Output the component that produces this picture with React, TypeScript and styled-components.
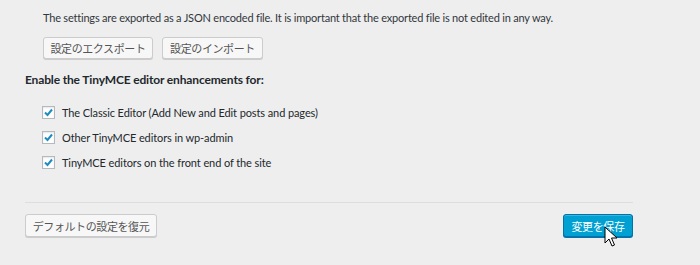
import React from "react";
import styled, { createGlobalStyle } from "styled-components";

const Global = createGlobalStyle`
  html, body { margin: 0; padding: 0; background: #eeeeee; }
  body { font-family: Lato, "Noto Sans", sans-serif; color: #444; }
`;

const Page = styled.div`
  width: 608px;
  margin-left: 25px;
  padding-top: 9px;
  position: relative;
  height: 256px;
`;

const Intro = styled.div`
  padding-left: 18px;
`;

const Note = styled.p`
  margin: 0;
  font-size: 11px;
  letter-spacing: -0.2px;
  line-height: 18px;
  white-space: nowrap;
  color: #32373c;
`;

const ButtonRow = styled.div`
  display: flex;
  gap: 9px;
  margin-top: 10px;
`;

const Button = styled.button<{ $primary?: boolean; $w: number; $h: number }>`
  box-sizing: border-box;
  width: ${(p) => p.$w}px;
  height: ${(p) => p.$h}px;
  padding: 0;
  border-radius: 3px;
  font-family: "Noto Sans CJK JP", sans-serif;
  font-size: 11px;
  letter-spacing: -0.4px;
  display: flex;
  align-items: center;
  justify-content: center;
  cursor: pointer;
  border: 1px solid ${(p) => (p.$primary ? "#0073aa" : "#cccccc")};
  background: ${(p) => (p.$primary ? "#00a0d2" : "#f7f7f7")};
  color: ${(p) => (p.$primary ? "#ffffff" : "#555555")};
  box-shadow: ${(p) =>
    p.$primary ? "inset 0 1px 0 rgba(120,200,230,.5), 0 1px 0 #0073aa" : "0 1px 0 #cccccc"};
`;

const Heading = styled.h3`
  margin: 12px 0 0;
  font-size: 12px;
  letter-spacing: -0.15px;
  font-weight: 700;
  line-height: 18px;
  color: #23282d;
`;

const List = styled.ul`
  list-style: none;
  margin: 14px 0 0;
  padding: 0 0 0 17px;
  display: flex;
  flex-direction: column;
  gap: 7px;
`;

const Item = styled.li`
  display: flex;
  align-items: center;
  gap: 7px;
  height: 18px;
  font-size: 11px;
  letter-spacing: -0.1px;
  color: #23282d;
`;

const Box = styled.span`
  box-sizing: border-box;
  width: 13px;
  height: 13px;
  background: #fff;
  border: 1px solid #b4b9be;
  box-shadow: inset 0 1px 2px rgba(0, 0, 0, 0.1);
  display: flex;
  align-items: center;
  justify-content: center;
`;

const Divider = styled.hr`
  border: 0;
  border-top: 1px solid #dddddd;
  margin: 31px 0 0;
`;

const Footer = styled.div`
  display: flex;
  justify-content: space-between;
  margin-top: 11px;
`;

const SaveWrap = styled.div`
  position: relative;
`;

const Cursor = styled.svg`
  position: absolute;
  left: 41px;
  top: 12px;
  pointer-events: none;
`;

const Check = () => (
  <svg width="11" height="11" viewBox="0 0 11 11">
    <path d="M2 5.5 L4.5 8 L9 2.5" fill="none" stroke="#1e8cbe" strokeWidth="2" />
  </svg>
);

const items = [
  "The Classic Editor (Add New and Edit posts and pages)",
  "Other TinyMCE editors in wp-admin",
  "TinyMCE editors on the front end of the site",
];

export default function App() {
  return (
    <>
      <Global />
      <Page>
        <Intro>
          <Note>
            The settings are exported as a JSON encoded file. It is important that the exported
            file is not edited in any way.
          </Note>
          <ButtonRow>
            <Button $w={110} $h={22}>設定のエクスポート</Button>
            <Button $w={101} $h={22}>設定のインポート</Button>
          </ButtonRow>
        </Intro>
        <Heading>Enable the TinyMCE editor enhancements for:</Heading>
        <List>
          {items.map((t) => (
            <Item key={t}>
              <Box>
                <Check />
              </Box>
              {t}
            </Item>
          ))}
        </List>
        <Divider />
        <Footer>
          <Button $w={132} $h={23}>デフォルトの設定を復元</Button>
          <SaveWrap>
            <Button $primary $w={70} $h={23}>変更を保存</Button>
            <Cursor width="14" height="22" viewBox="0 0 14 22">
              <path
                d="M1 1 L1 17 L5 13 L8 20 L10.5 19 L7.5 12 L13 12 Z"
                fill="#fff"
                stroke="#000"
                strokeWidth="1"
                strokeLinejoin="miter"
              />
            </Cursor>
          </SaveWrap>
        </Footer>
      </Page>
    </>
  );
}
